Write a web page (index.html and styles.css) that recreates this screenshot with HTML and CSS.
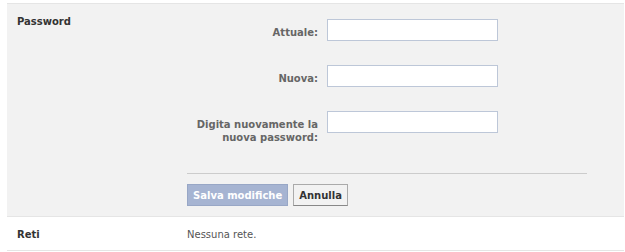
FILE: index.html
```html
<!DOCTYPE html>
<html lang="it">
<head>
  <meta charset="UTF-8">
  <title>Impostazioni account</title>
  <link rel="stylesheet" href="styles.css">
</head>
<body>

<div id="settings">
  <div class="row editing">
    <div class="row-title">Password</div>
    <div class="row-body">
      <div class="field">
        <label class="field-label" for="pwOld">Attuale:</label>
        <input class="field-input" type="password" id="pwOld">
      </div>
      <div class="field">
        <label class="field-label" for="pwNew">Nuova:</label>
        <input class="field-input" type="password" id="pwNew">
      </div>
      <div class="field">
        <label class="field-label" for="pwAgain">Digita nuovamente la nuova password:</label>
        <input class="field-input" type="password" id="pwAgain">
      </div>
      <div class="actions">
        <button class="btn btn-save" disabled>Salva modifiche</button>
        <button class="btn btn-cancel">Annulla</button>
      </div>
    </div>
  </div>

  <div class="row">
    <div class="row-title">Reti</div>
    <div class="row-value">Nessuna rete.</div>
  </div>
</div>

</body>
</html>
```

FILE: styles.css
```css
body, html {
  margin: 0;
  background: #fff;
  font-family: "DejaVu Sans", Verdana, sans-serif;
  font-size: 10px;
  line-height: 13px;
  color: #333;
}
#settings {
  margin: 3px 1px 0 7px;
  border-top: 1px solid #e5e5e5;
}
.row {
  display: flex;
  padding: 11px 0 9px 10px;
  border-bottom: 1px solid #e5e5e5;
}
.row.editing {
  background: #f2f2f2;
  padding-bottom: 10px;
}
.row-title {
  width: 170px;
  font-weight: bold;
  color: #333;
}
.row-value {
  color: #555;
}
.row-body {
  margin-top: 4px;
}
.field {
  display: flex;
  gap: 9px;
  margin-bottom: 24px;
}
.field:last-of-type {
  margin-bottom: 0;
}
.field-label {
  width: 131px;
  padding-top: 7px;
  text-align: right;
  font-weight: bold;
  color: #666;
}
.field-input {
  box-sizing: border-box;
  width: 171px;
  height: 22px;
  margin: 0;
  border: 1px solid #bdc7d8;
  background: #fff;
}
.actions {
  display: flex;
  gap: 5px;
  width: 400px;
  margin-top: 29px;
  padding-top: 10px;
  border-top: 1px solid #ccc;
}
.btn {
  font-family: inherit;
  font-size: 10px;
  line-height: 13px;
  font-weight: bold;
  padding: 4px 5px 3px;
  margin: 0;
  border: 1px solid #999;
  border-radius: 0;
}
.btn-save {
  background: #a6b4d2;
  border-color: #98a7c6;
  color: #fff;
}
.btn-cancel {
  background: #f2f2f2;
  border-color: #aaa #aaa #888;
  color: #333;
}
```
